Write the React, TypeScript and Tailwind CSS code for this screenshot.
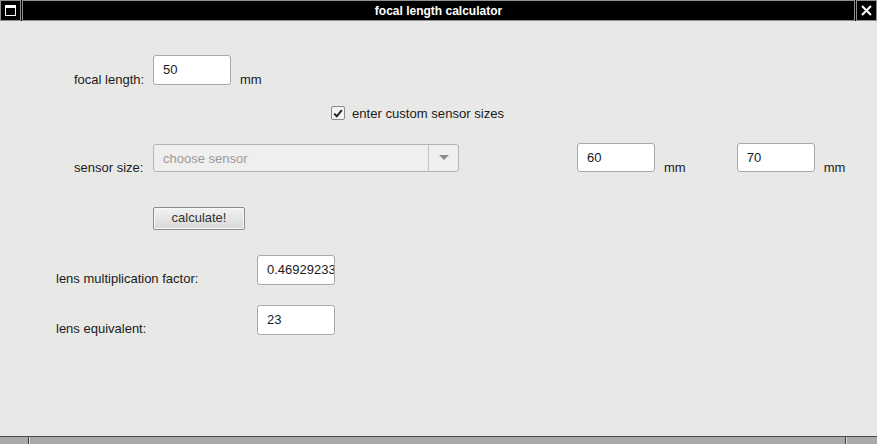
import React from "react";

const font = { fontFamily: '"Liberation Sans", Arial, sans-serif' };

function Field({ value, w = "w-[78px]", h = "h-[30px]" }: { value: string; w?: string; h?: string }) {
  return (
    <div
      className={`${w} ${h} shrink-0 bg-white border border-[#a9a9a9] rounded-[3px] pl-[9px] pr-[1px] flex items-center overflow-hidden whitespace-nowrap text-[13px] text-[#1a1a1a] leading-none pb-[1px]`}
    >
      {value}
    </div>
  );
}

export default function App() {
  return (
    <div className="w-[877px] h-[444px] flex flex-col bg-[#e8e8e7] overflow-hidden" style={font}>
      {/* title bar */}
      <div className="h-[21px] shrink-0 flex bg-black gap-[1px]">
        <div className="w-[21px] h-[21px] border border-[#8f8f8f] flex items-center justify-center">
          <svg width="11" height="11" viewBox="0 0 11 11">
            <rect x="0.5" y="0.5" width="10" height="10" fill="none" stroke="white" strokeWidth="1" />
            <rect x="0" y="0" width="11" height="3" fill="white" />
          </svg>
        </div>
        <div className="flex-1 h-[21px] border border-[#8f8f8f] flex items-center justify-center text-white font-bold text-[12px] leading-none">
          focal length calculator
        </div>
        <div className="w-[21px] h-[21px] border border-[#8f8f8f] flex items-center justify-center">
          <svg width="11" height="11" viewBox="0 0 11 11">
            <path d="M1 1 L10 10 M10 1 L1 10" stroke="white" strokeWidth="2" />
          </svg>
        </div>
      </div>

      {/* content */}
      <div className="flex-1 flex flex-col pt-[34px] text-[13px] text-[#1a1a1a]">
        {/* row 1 */}
        <div className="flex items-end h-[30px]">
          <div className="w-[153px] pl-[74px] leading-[15px] -mb-[2px]">focal length:</div>
          <Field value="50" />
          <div className="ml-[9px] leading-[15px] -mb-[2px]">mm</div>
        </div>

        {/* checkbox row */}
        <div className="flex items-center h-[14px] mt-[21px] pl-[331px]">
          <div className="w-[14px] h-[14px] bg-[#f4f4f4] border border-[#8a8a8a] rounded-[2px] flex items-center justify-center">
            <svg width="10" height="9" viewBox="0 0 10 9">
              <path d="M1.2 4.6 L3.8 7.3 L8.8 1.2" fill="none" stroke="#222" strokeWidth="2" />
            </svg>
          </div>
          <div className="ml-[7px] leading-[15px] text-[13.1px]">enter custom sensor sizes</div>
        </div>

        {/* row 3 */}
        <div className="flex items-end h-[29px] mt-[23px]">
          <div className="w-[153px] pl-[74px] leading-[15px] -mb-[3px]">sensor size:</div>
          <div className="w-[306px] h-[28px] shrink-0 flex bg-[#efefee] border border-[#b4b4b4] rounded-[3px]">
            <div className="flex-1 flex items-center pl-[9px] pt-[1px] text-[#9a9a9a]">choose sensor</div>
            <div className="w-[30px] border-l border-[#c4c4c4] flex items-center justify-center">
              <svg width="10" height="6" viewBox="0 0 10 6">
                <path d="M0 0 L10 0 L5 5 Z" fill="#8a8a8a" />
              </svg>
            </div>
          </div>
          <div className="w-[118px]" />
          <Field value="60" h="h-[29px]" />
          <div className="ml-[9px] leading-[15px] -mb-[3px]">mm</div>
          <div className="w-[51px]" />
          <Field value="70" h="h-[29px]" />
          <div className="ml-[9px] leading-[15px] -mb-[3px]">mm</div>
        </div>

        {/* button */}
        <div className="mt-[35px] pl-[153px]">
          <div className="w-[92px] h-[23px] border border-[#8c8c8c] rounded-[2px] bg-gradient-to-b from-[#f2f2f2] to-[#d9d9d9] flex items-center justify-center text-[#333] pb-[1px] shadow-[inset_0_0_0_1px_#f8f8f8]">
            calculate!
          </div>
        </div>

        {/* row 5 */}
        <div className="flex items-end h-[30px] mt-[25px]">
          <div className="w-[257px] pl-[56px] leading-[15px] -mb-[1px]">lens multiplication factor:</div>
          <Field value="0.469292337" />
        </div>

        {/* row 6 */}
        <div className="flex items-end h-[30px] mt-[20px]">
          <div className="w-[257px] pl-[56px] leading-[15px] -mb-[1px]">lens equivalent:</div>
          <Field value="23" />
        </div>
      </div>

      {/* bottom bar */}
      <div className="h-[8px] shrink-0 flex flex-col">
        <div className="h-[1px] bg-[#4a4a4a]" />
        <div className="flex-1 flex bg-[#a9a9a9]">
          <div className="w-[28px]" />
          <div className="w-[1px] bg-[#3c3c3c]" />
          <div className="w-[1px] bg-[#dcdcdc]" />
          <div className="flex-1" />
          <div className="w-[1px] bg-[#3c3c3c]" />
          <div className="w-[1px] bg-[#dcdcdc]" />
          <div className="w-[30px]" />
        </div>
      </div>
    </div>
  );
}
